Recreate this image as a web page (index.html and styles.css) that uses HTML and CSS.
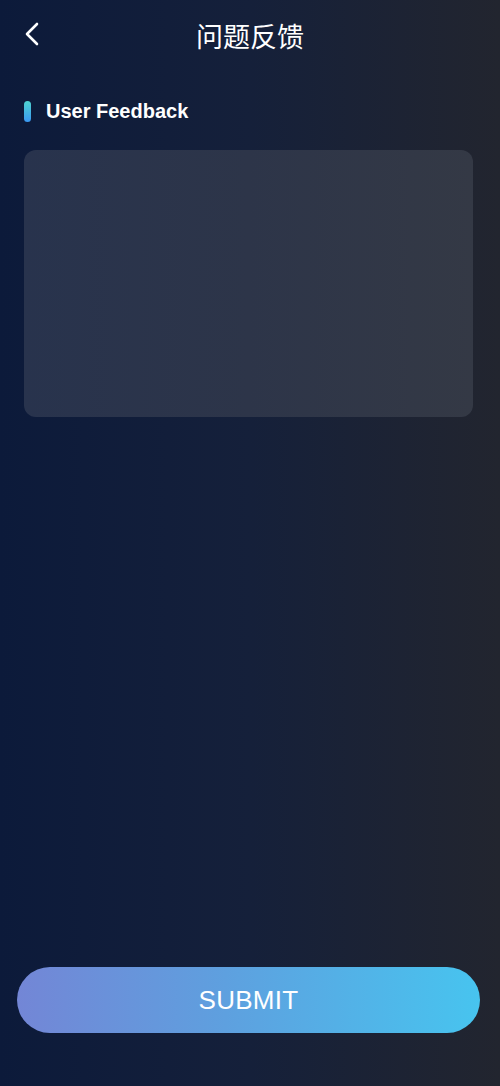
FILE: index.html
```html
<!DOCTYPE html>
<html lang="zh">
<head>
<meta charset="utf-8">
<title>问题反馈</title>
<link rel="stylesheet" href="styles.css">
</head>
<body>
<div class="page">
  <header class="nav">
    <button class="back" aria-label="back">
      <svg width="16" height="24" viewBox="0 0 16 24"><path d="M13 2 L3 12 L13 22" fill="none" stroke="#fff" stroke-width="2.6" stroke-linecap="round" stroke-linejoin="round"/></svg>
    </button>
    <h1 class="title">问题反馈</h1>
  </header>
  <main class="content">
    <div class="section-head">
      <span class="bar"></span>
      <span class="label">User Feedback</span>
    </div>
    <textarea class="feedback"></textarea>
  </main>
  <footer class="foot">
    <button class="submit">SUBMIT</button>
  </footer>
</div>
</body>
</html>
```
FILE: styles.css
```css
* { box-sizing: border-box; }
html, body { margin: 0; padding: 0; height: 100%; }
body {
  background: linear-gradient(90deg, #0c1a3a 0%, #15203a 50%, #22252f 100%);
  font-family: "Liberation Sans", Arial, "Noto Sans CJK SC", sans-serif;
  color: #fff;
}
.page {
  height: 1086px;
  display: flex;
  flex-direction: column;
}
.nav {
  height: 72px;
  display: flex;
  align-items: center;
  justify-content: center;
  position: relative;
}
.back {
  position: absolute;
  left: 21px;
  top: 20px;
  width: 22px;
  height: 28px;
  padding: 0;
  border: 0;
  background: none;
  display: flex;
  align-items: center;
  justify-content: center;
}
.title {
  margin: 0 0 2px;
  font-family: "Noto Sans CJK SC", sans-serif;
  font-weight: 400;
  font-size: 27px;
  line-height: 1;
}
.content {
  padding: 28px 27px 0 24px;
  flex: 1;
}
.section-head {
  display: flex;
  align-items: center;
  height: 22px;
  gap: 15px;
}
.bar {
  width: 7px;
  height: 21px;
  border-radius: 4px;
  background: linear-gradient(180deg, #4ed3cf 0%, #3a98f2 100%);
}
.label {
  font-weight: 700;
  font-size: 20px;
}
.feedback {
  display: block;
  width: 100%;
  height: 267px;
  margin-top: 28px;
  border: 0;
  border-radius: 12px;
  background: linear-gradient(90deg, #28334d 0%, #2d3549 50%, #343945 100%);
  color: #fff;
  outline: none;
  resize: none;
}
.foot {
  padding: 0 20px 53px 17px;
}
.submit {
  width: 100%;
  height: 66px;
  border: 0;
  border-radius: 33px;
  background: linear-gradient(90deg, #7386d6 0%, #5ea0df 45%, #47c4ef 100%);
  color: #fff;
  font-family: "Liberation Sans", Arial, sans-serif;
  font-size: 26px;
  letter-spacing: 0.3px;
}
```
